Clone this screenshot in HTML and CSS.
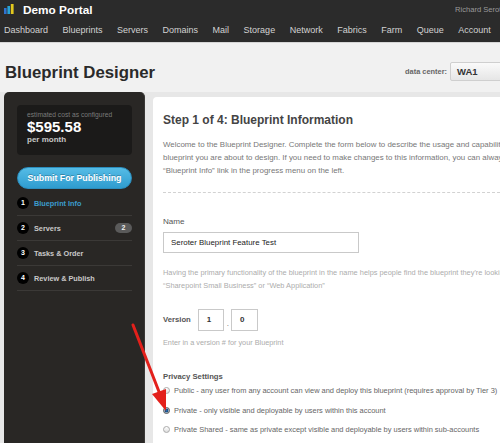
FILE: index.html
```html
<!DOCTYPE html>
<html>
<head>
<meta charset="utf-8">
<title>Blueprint Designer</title>
<link rel="stylesheet" href="styles.css">
</head>
<body>
<header class="topbar">
  <div class="brand-row">
    <svg class="logo" width="11" height="10" viewBox="0 0 11 10">
      <rect x="0" y="4" width="2.6" height="6" fill="#2f74d0"/>
      <rect x="3.4" y="2" width="2.6" height="8" fill="#26a3d6"/>
      <rect x="6.8" y="0" width="2.8" height="10" fill="#e2c81e"/>
    </svg>
    <span class="brand">Demo Portal</span>
    <span class="user">Richard Seroter</span>
  </div>
  <nav class="nav">
    <span>Dashboard</span>
    <span>Blueprints</span>
    <span>Servers</span>
    <span>Domains</span>
    <span>Mail</span>
    <span>Storage</span>
    <span>Network</span>
    <span>Fabrics</span>
    <span>Farm</span>
    <span>Queue</span>
    <span>Account</span>
  </nav>
</header>

<div class="title-row">
  <h1>Blueprint Designer</h1>
  <div class="dc">
    <span class="dc-label">data center:</span>
    <div class="dc-select">WA1</div>
  </div>
</div>

<div class="content">
  <aside class="sidebar">
    <div class="cost">
      <div class="cost-caption">estimated cost as configured</div>
      <div class="cost-value">$595.58</div>
      <div class="cost-period">per month</div>
    </div>
    <div class="submit">Submit For Publishing</div>
    <ul class="steps">
      <li class="step active"><span class="num">1</span><span class="step-label">Blueprint Info</span></li>
      <li class="step"><span class="num">2</span><span class="step-label">Servers</span><span class="badge">2</span></li>
      <li class="step"><span class="num">3</span><span class="step-label">Tasks &amp; Order</span></li>
      <li class="step"><span class="num">4</span><span class="step-label">Review &amp; Publish</span></li>
    </ul>
  </aside>

  <main class="panel">
    <h2>Step 1 of 4: Blueprint Information</h2>
    <p class="intro">Welcome to the Blueprint Designer. Complete the form below to describe the usage and capabilities of the<br>blueprint you are about to design. If you need to make changes to this information, you can always click the<br>“Blueprint Info” link in the progress menu on the left.</p>
    <div class="divider"></div>

    <div class="label">Name</div>
    <div class="field">Seroter Blueprint Feature Test</div>
    <p class="help">Having the primary functionality of the blueprint in the name helps people find the blueprint they're looking for, such as<br>“Sharepoint Small Business” or “Web Application”</p>

    <div class="version-row">
      <span class="label-bold">Version</span>
      <div class="vbox">1</div>
      <span class="vdot">.</span>
      <div class="vbox vbox2">0</div>
    </div>
    <p class="help help-version">Enter in a version # for your Blueprint</p>

    <div class="label-bold privacy-title">Privacy Settings</div>
    <div class="radio-row"><span class="radio"></span><span>Public - any user from any account can view and deploy this blueprint (requires approval by Tier 3)</span></div>
    <div class="radio-row"><span class="radio checked"></span><span>Private - only visible and deployable by users within this account</span></div>
    <div class="radio-row"><span class="radio"></span><span>Private Shared - same as private except visible and deployable by users within sub-accounts</span></div>
  </main>
</div>

<svg class="arrow" width="500" height="443" viewBox="0 0 500 443">
  <line x1="133" y1="325" x2="159.5" y2="393" stroke="#e3201b" stroke-width="3" stroke-linecap="round"/>
  <polygon points="166,411 152,394 166,389" fill="#e3201b"/>
</svg>
</body>
</html>
```

FILE: styles.css
```css
html, body {
  margin: 0;
  padding: 0;
  width: 500px;
  height: 443px;
  overflow: hidden;
}

body {
  position: relative;
  background: #f1f1f1;
  font-family: "Liberation Sans", Arial, sans-serif;
  color: #333;
}

/* ---------- top bar ---------- */
.topbar {
  background: #2b2b2b;
  height: 42px;
  border-bottom: 1px solid #d6d6d6;
}

.brand-row {
  display: flex;
  align-items: center;
  height: 20px;
  padding-left: 4px;
}

.logo {
  display: block;
  margin-top: -2px;
}

.brand {
  margin-left: 8px;
  font-size: 11.8px;
  font-weight: bold;
  color: #fff;
  flex: 1;
}

.user {
  width: 45px;
  overflow: hidden;
  white-space: nowrap;
  font-size: 7.6px;
  color: #9a9a9a;
  margin-top: -1px;
}

.nav {
  display: flex;
  gap: 14.5px;
  padding-left: 4px;
  height: 20px;
  align-items: center;
  font-size: 9px;
  color: #d2d2d2;
  white-space: nowrap;
}

/* ---------- title row ---------- */
.title-row {
  display: flex;
  align-items: flex-start;
  height: 49px;
  padding-left: 5px;
}

.title-row h1 {
  margin: 20px 0 0 0;
  font-size: 16.8px;
  line-height: 20px;
  color: #2a2a2a;
  font-weight: bold;
}

.dc {
  margin-left: auto;
  margin-right: -30px;
  margin-top: 19px;
  display: flex;
  align-items: center;
  height: 18px;
}

.dc-label {
  font-size: 7.4px;
  font-weight: bold;
  color: #666;
}

.dc-select {
  margin-left: 3px;
  width: 72px;
  height: 17px;
  line-height: 17px;
  border: 1px solid #cfcfcf;
  border-radius: 2px;
  background: linear-gradient(#fafafa, #e6e6e6);
  padding-left: 6px;
  font-size: 9.5px;
  font-weight: bold;
  color: #333;
}

/* ---------- content ---------- */
.content {
  display: flex;
  align-items: stretch;
  background: #e7e7e7;
  height: 351px;
}

.sidebar {
  margin-left: 4px;
  width: 141px;
  box-sizing: border-box;
  background: #292725;
  border-radius: 5px 5px 0 0;
  border-right: 1px solid #3a3836;
  padding: 13px 12px 0 13px;
}

.cost {
  height: 50px;
  box-sizing: border-box;
  background: #1b1a19;
  border-radius: 4px;
  padding: 6px 0 0 10px;
}

.cost-caption {
  font-size: 6.7px;
  line-height: 8px;
  color: #7a7a7a;
}

.cost-value {
  font-size: 15px;
  line-height: 16px;
  font-weight: bold;
  color: #fff;
}

.cost-period {
  font-size: 8px;
  line-height: 10px;
  font-weight: bold;
  color: #c8c8c8;
}

.submit {
  margin-top: 12px;
  height: 22px;
  box-sizing: border-box;
  border-radius: 11px;
  border: 1px solid #2b8dbd;
  background: linear-gradient(#55bce6, #2f9ccf);
  color: #fff;
  font-size: 8.8px;
  font-weight: bold;
  line-height: 20px;
  text-align: center;
  text-shadow: 0 -1px 0 rgba(0, 0, 0, 0.25);
}

.steps {
  list-style: none;
  margin: 2px 0 0 0;
  padding: 0;
}

.step {
  display: flex;
  align-items: center;
  height: 24px;
  border-bottom: 1px solid #3b3937;
}

.num {
  width: 12px;
  height: 12px;
  border-radius: 50%;
  background: #000;
  color: #fff;
  font-size: 7px;
  font-weight: bold;
  line-height: 12px;
  text-align: center;
}

.step-label {
  margin-left: 5px;
  font-size: 7.3px;
  font-weight: bold;
  color: #c9c9c9;
}

.step.active .step-label {
  color: #3c9ccd;
}

.badge {
  margin-left: auto;
  width: 17px;
  height: 10px;
  border-radius: 5px;
  background: #5a5a5a;
  color: #eee;
  font-size: 7px;
  font-weight: bold;
  line-height: 10px;
  text-align: center;
}

/* ---------- main panel ---------- */
.panel {
  flex: 1;
  margin-left: 8px;
  margin-top: 5px;
  background: #fff;
  border-radius: 4px 0 0 0;
  padding: 16px 0 0 10px;
  overflow: hidden;
  white-space: nowrap;
}

.panel h2 {
  margin: 0;
  font-size: 12px;
  line-height: 14px;
  color: #444;
  font-weight: bold;
}

.intro {
  margin: 10.5px 0 0 0;
  font-size: 7.9px;
  line-height: 13px;
  color: #777;
}

.divider {
  margin-top: 15.5px;
  border-top: 1px dashed #d2d2d2;
}

.label {
  margin-top: 24px;
  font-size: 8.1px;
  line-height: 10px;
  color: #555;
}

.field {
  margin-top: 5px;
  width: 196px;
  height: 21px;
  box-sizing: border-box;
  border: 1px solid #c9c9c9;
  padding-left: 7px;
  font-size: 7.9px;
  line-height: 19px;
  color: #222;
}

.help {
  margin: 12.5px 0 0 0;
  font-size: 7.4px;
  line-height: 13px;
  color: #acacac;
}

.version-row {
  margin-top: 17.5px;
  display: flex;
  align-items: center;
  height: 22px;
}

.label-bold {
  font-size: 7.7px;
  line-height: 10px;
  font-weight: bold;
  color: #555;
}

.vbox {
  margin-left: 7px;
  width: 26px;
  height: 22px;
  box-sizing: border-box;
  border: 1px solid #c9c9c9;
  padding-left: 8px;
  font-size: 8px;
  font-weight: bold;
  line-height: 20px;
  color: #333;
}

.vdot {
  margin-left: 3px;
  font-size: 8px;
  color: #666;
  align-self: flex-end;
  line-height: 14px;
}

.vbox2 {
  margin-left: 2px;
  width: 27px;
}

.help-version {
  margin-top: 7px;
  font-size: 7.3px;
  line-height: 10px;
}

.privacy-title {
  margin-top: 24px;
}

.radio-row {
  display: flex;
  align-items: center;
  height: 19.5px;
  font-size: 7.45px;
  color: #666;
}

.privacy-title + .radio-row {
  margin-top: -1px;
}

.radio {
  width: 7px;
  height: 7px;
  box-sizing: border-box;
  border-radius: 50%;
  border: 1px solid #aaa;
  background: linear-gradient(#fff, #dedede);
  margin-right: 4px;
}

.radio.checked {
  border-color: #555;
  background: radial-gradient(circle, #1b6fb5 0, #1b4f85 40%, #9fb7cc 60%, #e8eef4 100%);
}

.arrow {
  position: absolute;
  left: 0;
  top: 0;
  pointer-events: none;
}
```
